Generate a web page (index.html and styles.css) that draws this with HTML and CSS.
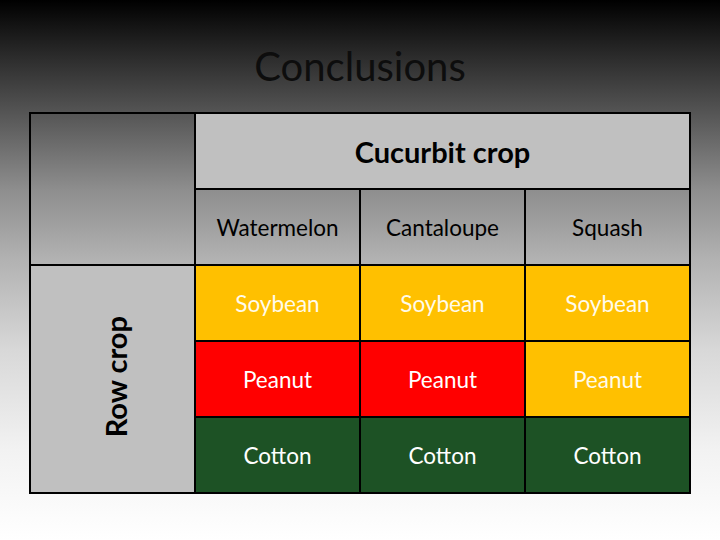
FILE: index.html
```html
<!DOCTYPE html>
<html>
<head>
<meta charset="utf-8">
<link rel="stylesheet" href="styles.css">
</head>
<body>
<div class="slide">
  <h1 class="title">Conclusions</h1>
  <table class="grid">
    <tr>
      <td class="blank" rowspan="2"></td>
      <th class="group" colspan="3">Cucurbit crop</th>
    </tr>
    <tr class="crops">
      <th>Watermelon</th>
      <th>Cantaloupe</th>
      <th>Squash</th>
    </tr>
    <tr>
      <td class="rowcrop" rowspan="3"><span class="vert">Row crop</span></td>
      <td class="c yellow">Soybean</td>
      <td class="c yellow">Soybean</td>
      <td class="c yellow">Soybean</td>
    </tr>
    <tr>
      <td class="c red">Peanut</td>
      <td class="c red">Peanut</td>
      <td class="c yellow">Peanut</td>
    </tr>
    <tr>
      <td class="c green">Cotton</td>
      <td class="c green">Cotton</td>
      <td class="c green">Cotton</td>
    </tr>
  </table>
</div>
</body>
</html>
```
FILE: styles.css
```css
html, body {
  margin: 0;
  padding: 0;
}
body {
  width: 720px;
  height: 540px;
  overflow: hidden;
  background: linear-gradient(to bottom, #000000 0px, #2e2e2e 60px, #5a5a5a 120px, #8e8e8e 190px, #b2b2b2 260px, #d8d8d8 350px, #f2f2f2 450px, #ffffff 540px);
  font-family: Lato, "Open Sans", sans-serif;
}
.slide {
  padding-top: 40px;
}
.title {
  margin: 0;
  height: 52px;
  line-height: 52px;
  text-align: center;
  font-family: Lato, sans-serif;
  font-weight: 400;
  font-size: 40px;
  color: #0d0d0d;
}
.grid {
  margin: 20px 0 0 29px;
  border-collapse: collapse;
  width: 662px;
  table-layout: fixed;
}
.grid td, .grid th {
  border: 2px solid #000;
  height: 74px;
  padding: 0;
  text-align: center;
  vertical-align: middle;
  font-size: 22.5px;
  font-weight: 400;
  color: #000;
}
.grid .group {
  background: #c0c0c0;
  font-weight: 700;
  font-size: 29px;
  padding-bottom: 0;
}
.blank,
.crops th {
  background: transparent;
}
.grid .rowcrop {
  background: #c0c0c0;
  padding-left: 5px;
}
.vert {
  display: inline-block;
  writing-mode: vertical-rl;
  transform: rotate(180deg);
  font-weight: 700;
  font-size: 29px;
}
.grid .c {
  color: #ffffff;
}
.yellow {
  background: #ffc000;
}
.grid .yellow.c {
  color: #fffbea;
}
.red {
  background: #ff0000;
}
.green {
  background: #1d5225;
}
```
